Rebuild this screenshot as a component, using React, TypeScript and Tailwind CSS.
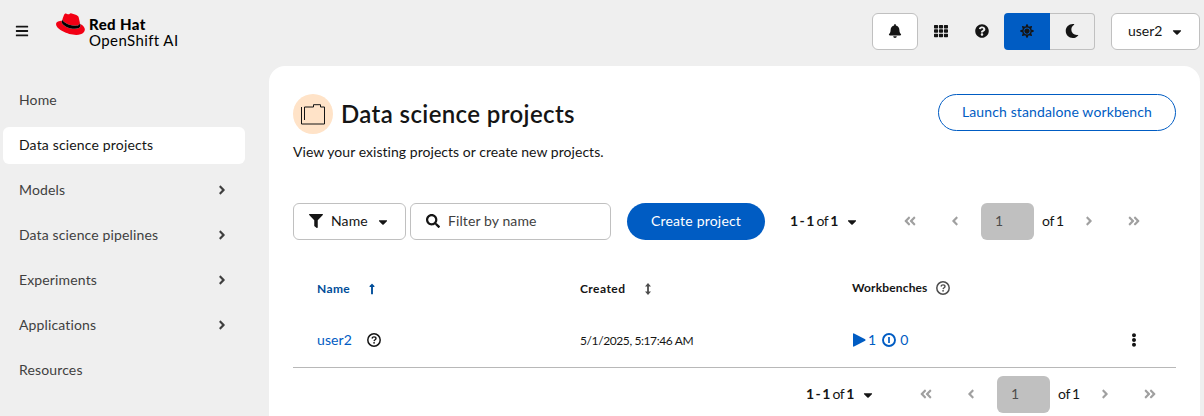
import type { ReactNode } from "react";
import {
  FaAngleDoubleLeft,
  FaAngleDoubleRight,
  FaAngleLeft,
  FaAngleRight,
  FaBars,
  FaBell,
  FaCaretDown,
  FaEllipsisV,
  FaFilter,
  FaLongArrowAltUp,
  FaMoon,
  FaQuestionCircle,
  FaSearch,
  FaSun,
  FaTh,
} from "react-icons/fa";

const navItems = [
  { label: "Home" },
  { label: "Data science projects", active: true },
  { label: "Models", expandable: true },
  { label: "Data science pipelines", expandable: true },
  { label: "Experiments", expandable: true },
  { label: "Applications", expandable: true },
  { label: "Resources" },
];

function HelpOutline({ className }: { className?: string }) {
  return (
    <svg viewBox="0 0 14 14" width="14" height="14" fill="none" stroke="currentColor" className={className}>
      <circle cx="7" cy="7" r="6.2" strokeWidth="1.5" />
      <path d="M5 5.5C5.2 4.4 6 3.9 7 3.9c1.1 0 2 .7 2 1.6 0 1.3-1.8 1.2-1.9 2.6" strokeWidth="1.4" />
      <circle cx="7.05" cy="9.8" r=".9" fill="currentColor" stroke="none" />
    </svg>
  );
}

function StoppedIcon() {
  return (
    <svg viewBox="0 0 14 14" width="14" height="14" fill="none" stroke="currentColor">
      <circle cx="7" cy="7" r="6" strokeWidth="1.9" />
      <path d="M7 4v6" strokeWidth="1.7" />
    </svg>
  );
}

function HatLogo() {
  return (
    <svg viewBox="0 0 192 145" width="29" height="22">
      <path
        fill="#f20014"
        d="M127.470 83.490c12.510 0 30.610-2.580 30.610-17.460a14 14 0 0 0-.31-3.420l-7.450-32.360c-1.720-7.120-3.230-10.350-15.730-16.600C124.890 8.690 103.760.5 97.510.5 91.690.5 90 8 83.060 8c-6.680 0-11.640-5.600-17.890-5.600-6 0-9.910 4.090-12.930 12.500 0 0-8.410 23.720-9.490 27.160A6.430 6.430 0 0 0 42.530 44c0 9.220 36.300 39.450 84.940 39.450M160 72.070c1.730 8.190 1.730 9.050 1.730 10.130 0 14-15.740 21.770-36.430 21.770C78.540 104 37.580 76.600 37.580 58.490a18.450 18.450 0 0 1 1.510-7.330C22.270 52 .5 55 .5 74.220c0 31.480 74.590 70.280 133.650 70.280 45.280 0 56.700-20.480 56.700-36.650 0-12.720-11-27.160-30.830-35.780"
      />
      <path
        fill="#000"
        d="M160 72.070c1.730 8.190 1.730 9.050 1.730 10.130 0 14-15.740 21.770-36.430 21.770C78.540 104 37.580 76.600 37.580 58.490a18.450 18.450 0 0 1 1.510-7.330l3.660-9.060A6.430 6.430 0 0 0 42.530 44c0 9.220 36.300 39.450 84.940 39.450 12.510 0 30.610-2.580 30.610-17.460a14 14 0 0 0-.31-3.420z"
      />
    </svg>
  );
}

function Header() {
  return (
    <header className="flex h-[66px] items-start pt-[13px]">
      <div className="flex h-[37px] w-11 items-center justify-center pb-0.5">
        <FaBars className="size-3.5" />
      </div>
      <div className="ml-3 flex text-black">
        <HatLogo />
        <div className="ml-[4px] mt-[3px] text-[15px] leading-4">
          <div className="whitespace-nowrap font-black tracking-[0.4px]">Red Hat</div>
          <div className="whitespace-nowrap tracking-[0.4px]">OpenShift AI</div>
        </div>
      </div>
      <div className="ml-auto mr-1 flex h-[37px] items-stretch">
        <button className="flex w-[46px] items-center justify-center rounded-md border border-[#c0c0c0] bg-white pb-0.5">
          <FaBell className="size-3.5" />
        </button>
        <button className="flex w-[46px] items-center justify-center pb-0.5">
          <FaTh className="size-3.5" />
        </button>
        <button className="flex w-9 items-center justify-center pb-0.5">
          <FaQuestionCircle className="size-3.5" />
        </button>
        <div className="ml-1 flex w-[91px]">
          <button className="flex w-[46px] items-center justify-center rounded-l-[4px] bg-[#005cc3] pb-0.5">
            <FaSun className="size-3.5" />
          </button>
          <button className="flex flex-1 items-center justify-center rounded-r-[4px] border border-l-0 border-[#c0c0c0] pb-0.5">
            <FaMoon className="size-3.5" />
          </button>
        </div>
        <button className="ml-4 flex w-[89px] items-center rounded-md border border-[#c0c0c0] bg-white pb-0.5 pl-4">
          user2
          <FaCaretDown className="ml-auto mr-[15px] mt-0.5 size-3.5" />
        </button>
      </div>
    </header>
  );
}

function Sidebar() {
  return (
    <nav className="flex w-[269px] shrink-0 flex-col gap-2 pl-[3px] pt-4">
      {navItems.map((item) => (
        <a
          key={item.label}
          className={
            item.active
              ? "flex h-[37px] w-[242px] shrink-0 items-center rounded-md bg-white px-4 pb-0.5 tracking-[0.16px]"
              : "flex h-[37px] w-[242px] shrink-0 items-center rounded-md px-4 pb-0.5 tracking-[0.14px] text-[#3f3f3f]"
          }
        >
          {item.label}
          {item.expandable && <FaAngleRight className="ml-auto size-3.5" />}
        </a>
      ))}
    </nav>
  );
}

function PageButton({ children }: { children: ReactNode }) {
  return <button className="flex w-[45px] items-center justify-center pb-0.5 text-[#a0a0a0]">{children}</button>;
}

function Pagination() {
  return (
    <div className="flex h-[37px] w-[366px] shrink-0 items-stretch">
      <button className="flex w-[97px] items-center whitespace-nowrap pb-0.5">
        <span className="font-bold tracking-[-0.95px]">1 - 1</span>
        <span className="ml-[3px] tracking-[-0.5px]">of</span>
        <span className="ml-0.5 font-bold tracking-[-1px]">1</span>
        <FaCaretDown className="ml-auto mr-[28px] mt-0.5 size-3.5" />
      </button>
      <PageButton>
        <FaAngleDoubleLeft className="size-3.5" />
      </PageButton>
      <PageButton>
        <FaAngleLeft className="size-3.5" />
      </PageButton>
      <div className="ml-1 flex w-[53px] items-center rounded-md bg-[#c0c0c0] pb-0.5 pl-3.5 text-[#4d4d4d]">1</div>
      <div className="ml-2 flex w-6 items-center gap-[2px] whitespace-nowrap pb-0.5 tracking-[-0.4px]">
        <span>of</span>
        <span>1</span>
      </div>
      <PageButton>
        <FaAngleRight className="size-3.5" />
      </PageButton>
      <PageButton>
        <FaAngleDoubleRight className="size-3.5" />
      </PageButton>
    </div>
  );
}

function ProjectsTable() {
  return (
    <div className="mt-[27px] border-b border-[#b8b8b8]">
      <div className="grid h-[45px] grid-cols-[263px_272px_1fr] items-center pl-6 text-xs font-bold">
        <div className="flex items-center pb-0.5 text-[#004d99]">
          <span className="tracking-[0.35px]">Name</span>
          <FaLongArrowAltUp className="ml-4 size-3" />
        </div>
        <div className="flex items-center pb-0.5">
          <span className="tracking-[0.45px]">Created</span>
          <svg viewBox="0 0 8 12" width="8" height="12" fill="#4d4d4d" className="ml-[19px]">
            <path d="M4 0l3 3.400H4.900v5.200H7L4 12 1 8.600h2.100V3.400H1z" />
          </svg>
        </div>
        <div className="flex items-center pb-1">
          <span className="tracking-[0.15px]">Workbenches</span>
          <HelpOutline className="ml-2 text-[#4d4d4d]" />
        </div>
      </div>
      <div className="grid h-[55px] grid-cols-[263px_272px_1fr_84px] items-center pl-6">
        <div className="flex items-center">
          <a className="tracking-[0.1px] text-[#005cc3]">user2</a>
          <HelpOutline className="ml-[15px]" />
        </div>
        <div className="whitespace-nowrap pt-0.5 text-xs tracking-[-0.4px]">5/1/2025, 5:17:46 AM</div>
        <div className="flex items-center text-[#005cc3]">
          <svg viewBox="0 0 13 14" width="13" height="14" fill="currentColor" className="ml-px">
            <path d="M0 1Q0 0 1 .4L12.200 6.300Q13 7 12.200 7.700L1 13.600Q0 14 0 13z" />
          </svg>
          <span className="ml-0.5 mr-1.5">1</span>
          <StoppedIcon />
          <span className="ml-1">0</span>
        </div>
        <button className="flex justify-center">
          <FaEllipsisV className="size-3.5" />
        </button>
      </div>
    </div>
  );
}

export default function App() {
  return (
    <div className="flex h-[416px] flex-col overflow-hidden bg-[#efefef] font-['Lato','Liberation_Sans',sans-serif] text-sm text-[#151515] [font-variant-ligatures:none]">
      <Header />
      <div className="flex min-h-0 flex-1">
        <Sidebar />
        <main className="mr-1 h-[350px] flex-1 overflow-hidden rounded-t-2xl bg-white px-6 pt-7">
          <div className="flex items-start justify-between">
            <div>
              <div className="flex items-center">
                <div className="flex size-10 items-center justify-center rounded-full bg-[#ffe3c8]">
                  <svg viewBox="0 0 24 21" width="24" height="21" fill="none" stroke="#151515">
                    <path d="M.5 3v17h23V3h-4V.7h-7V3h-9v13" />
                  </svg>
                </div>
                <h1 className="ml-2 text-2xl font-semibold tracking-[0.38px]">Data science projects</h1>
              </div>
              <p className="mt-[7px] leading-[21px] tracking-[0.04px]">
                View your existing projects or create new projects.
              </p>
            </div>
            <button className="h-[37px] w-[238px] rounded-full border border-[#005cc3] pb-0.5 tracking-[0.12px] text-[#005cc3]">
              Launch standalone workbench
            </button>
          </div>
          <div className="mt-[41px] flex h-[37px]">
            <button className="flex w-[113px] items-center rounded-md border border-[#c0c0c0] pb-0.5 pl-[15px]">
              <FaFilter className="size-3.5" />
              <span className="ml-2 tracking-[0.1px]">Name</span>
              <FaCaretDown className="ml-auto mr-[15px] mt-0.5 size-3.5" />
            </button>
            <div className="ml-1 flex w-[201px] items-center rounded-md border border-[#c0c0c0] pb-0.5 pl-[15px]">
              <FaSearch className="size-3.5" />
              <span className="ml-2 tracking-[0.1px] text-[#3f3f3f]">Filter by name</span>
            </div>
            <button className="ml-4 mr-[25px] w-[138px] rounded-full bg-[#005cc3] pb-0.5 tracking-[0.2px] text-white">
              Create project
            </button>
            <Pagination />
          </div>
          <ProjectsTable />
          <div className="mt-2 flex justify-end">
            <div className="-mr-1 w-[374px]">
              <Pagination />
            </div>
          </div>
        </main>
      </div>
    </div>
  );
}
